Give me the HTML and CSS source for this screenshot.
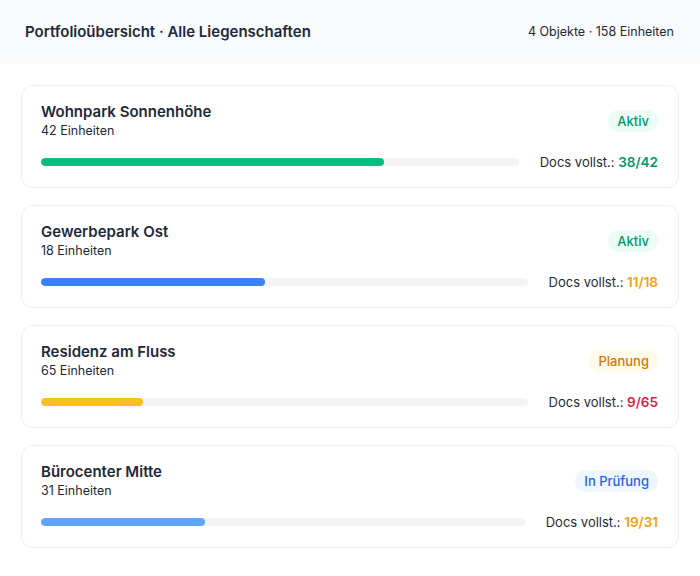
FILE: index.html
```html
<!DOCTYPE html>
<html lang="de">
<head>
    <meta charset="UTF-8">
    <meta name="viewport" content="width=device-width, initial-scale=1.0">
    <title>Portfolioübersicht</title>
    <link rel="stylesheet" href="styles.css">
</head>
<body>
    <header class="top-bar">
        <h1>Portfolioübersicht · Alle Liegenschaften</h1>
        <span class="summary">4 Objekte · 158 Einheiten</span>
    </header>

    <main class="property-list">
        <div class="property-card">
            <div class="card-head">
                <div>
                    <div class="property-name">Wohnpark Sonnenhöhe</div>
                    <div class="property-units">42 Einheiten</div>
                </div>
                <span class="badge badge-active">Aktiv</span>
            </div>
            <div class="card-foot">
                <div class="progress"><div class="progress-fill fill-green" style="width: 71.7%"></div></div>
                <div class="docs">Docs vollst.: <span class="docs-count count-green">38/42</span></div>
            </div>
        </div>

        <div class="property-card">
            <div class="card-head">
                <div>
                    <div class="property-name">Gewerbepark Ost</div>
                    <div class="property-units">18 Einheiten</div>
                </div>
                <span class="badge badge-active">Aktiv</span>
            </div>
            <div class="card-foot">
                <div class="progress"><div class="progress-fill fill-blue" style="width: 46%"></div></div>
                <div class="docs">Docs vollst.: <span class="docs-count count-orange">11/18</span></div>
            </div>
        </div>

        <div class="property-card">
            <div class="card-head">
                <div>
                    <div class="property-name">Residenz am Fluss</div>
                    <div class="property-units">65 Einheiten</div>
                </div>
                <span class="badge badge-planning">Planung</span>
            </div>
            <div class="card-foot">
                <div class="progress"><div class="progress-fill fill-yellow" style="width: 21%"></div></div>
                <div class="docs">Docs vollst.: <span class="docs-count count-red">9/65</span></div>
            </div>
        </div>

        <div class="property-card">
            <div class="card-head">
                <div>
                    <div class="property-name">Bürocenter Mitte</div>
                    <div class="property-units">31 Einheiten</div>
                </div>
                <span class="badge badge-review">In Prüfung</span>
            </div>
            <div class="card-foot">
                <div class="progress"><div class="progress-fill fill-lightblue" style="width: 34%"></div></div>
                <div class="docs">Docs vollst.: <span class="docs-count count-orange">19/31</span></div>
            </div>
        </div>
    </main>
</body>
</html>
```

FILE: styles.css
```css
body {
    margin: 0;
    font-family: Inter, "Noto Sans", sans-serif;
    background-color: #ffffff;
    color: #1e2433;
}
.top-bar {
    height: 62px;
    display: flex;
    align-items: center;
    justify-content: space-between;
    padding: 0 26px 0 25px;
    background-color: #f8fafc;
    box-shadow: 0 1px 2px rgba(15, 23, 42, 0.03);
}
.top-bar h1 {
    margin: 0;
    font-size: 15px;
    font-weight: 600;
    color: #1e293b;
}
.summary {
    font-size: 12.5px;
    color: #1f2937;
}
.property-list {
    display: flex;
    flex-direction: column;
    gap: 17px;
    padding: 23px 21px;
}
.property-card {
    border: 1px solid #eef0f3;
    border-radius: 12px;
    padding: 16px 19px 15px;
    background: white;
    box-shadow: 0 1px 2px rgba(15, 23, 42, 0.02);
}
.card-head {
    display: flex;
    align-items: center;
    justify-content: space-between;
}
.property-name {
    font-size: 15px;
    line-height: 20px;
    font-weight: 600;
    color: #1e293b;
}
.property-units {
    font-size: 12.5px;
    line-height: 18px;
    color: #1f2937;
}
.badge {
    font-size: 13px;
    font-weight: 500;
    line-height: 22px;
    padding: 0 9px;
    border-radius: 11px;
    margin-right: 1px;
}
.badge-active {
    background-color: #ecfdf5;
    color: #059669;
}
.badge-planning {
    background-color: #fffbeb;
    color: #d97706;
}
.badge-review {
    background-color: #eff6ff;
    color: #2563eb;
}
.card-foot {
    display: flex;
    align-items: center;
    gap: 21px;
    margin-top: 12px;
    height: 20px;
}
.progress {
    flex: 1;
    height: 8px;
    border-radius: 4px;
    background-color: #f3f4f6;
    overflow: hidden;
}
.progress-fill {
    height: 100%;
    border-radius: 4px;
}
.fill-green { background-color: #10b981; }
.fill-blue { background-color: #3b82f6; }
.fill-yellow { background-color: #fbbf24; }
.fill-lightblue { background-color: #60a5fa; }
.docs {
    font-size: 13px;
    color: #1f2937;
    white-space: nowrap;
    margin-right: 1px;
}
.docs-count {
    font-size: 13.5px;
    font-weight: 600;
}
.count-green { color: #059669; }
.count-orange { color: #f59e0b; }
.count-red { color: #e11d48; }
```
